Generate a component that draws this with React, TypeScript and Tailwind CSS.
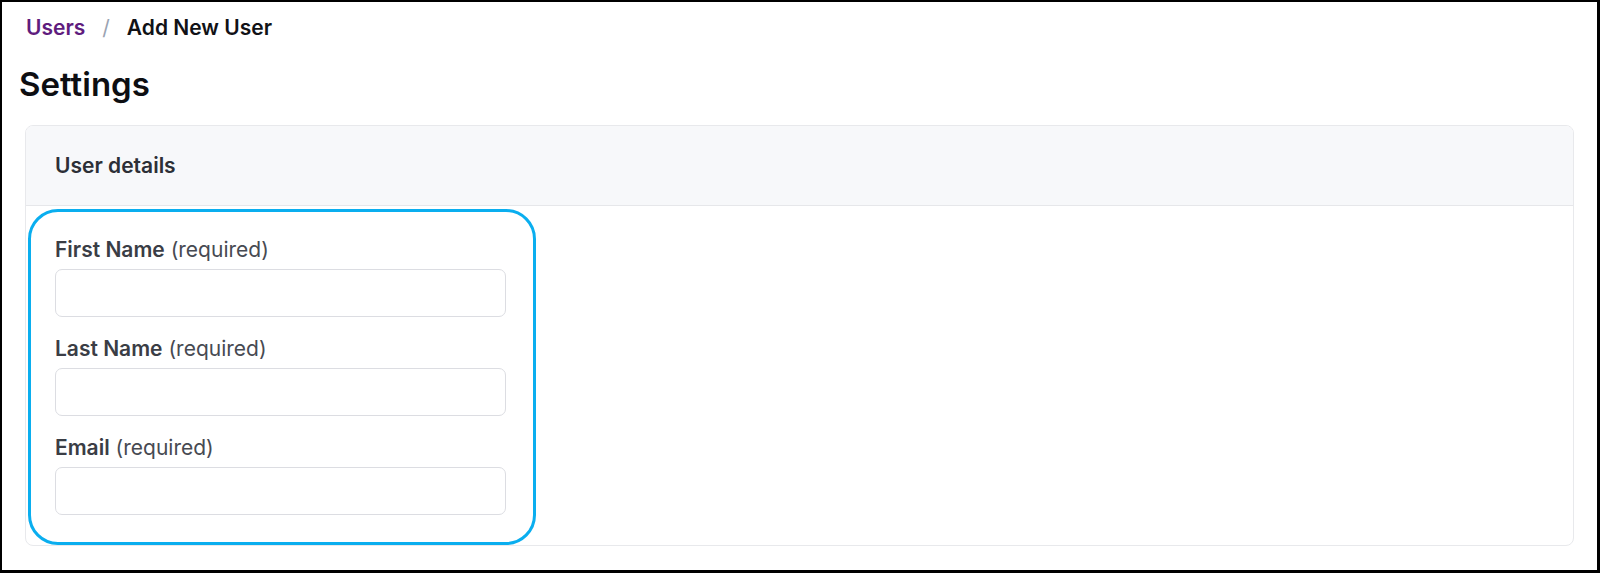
import React from "react"

const fields = ["First Name", "Last Name", "Email"]

export default function App() {
  return (
    <div
      className="h-[573px] w-full border-t-2 border-l-2 border-r-[3px] border-b-[3px] border-black bg-white text-[#1f2127]"
      style={{ fontFamily: "Inter, 'Open Sans', sans-serif" }}
    >
      {/* Breadcrumb */}
      <nav className="flex items-center pl-[24px] pt-[12px] text-[21px] font-semibold leading-[28px]">
        <span className="text-[#5f1c7e]">Users</span>
        <span className="mx-[17px] font-normal text-[#9aa3b2]">/</span>
        <span className="text-[#111216]">Add New User</span>
      </nav>

      <h1 className="pl-[17px] pt-[22px] text-[33px] font-semibold leading-[40px] text-[#0d0e12]">Settings</h1>

      {/* Card */}
      <div className="mx-[23px] mt-[21px] overflow-hidden rounded-lg border border-[#e8e9ec]">
        <div className="flex h-[80px] items-center border-b border-[#e6e7ea] bg-[#f7f8fa] px-[29px]">
          <h2 className="text-[21px] font-semibold text-[#2c2f36]">User details</h2>
        </div>
        <div className="px-[2px] pt-[3px]">
          <div className="flex w-[508px] flex-col gap-[19px] rounded-[30px] border-[3px] border-[#0aaeef] pb-[27px] pl-[24px] pr-[27px] pt-[25px]">
            {fields.map((f) => (
              <div key={f} className="flex flex-col gap-[6px]">
                <label className="text-[21px] leading-[26px] text-[#474a52]">
                  <span className="font-semibold text-[#3a3d45]">{f}</span> (required)
                </label>
                <input
                  type="text"
                  className="h-[48px] w-[451px] rounded-[7px] border border-[#dcdde2] bg-white px-3 outline-none"
                />
              </div>
            ))}
          </div>
        </div>
      </div>
    </div>
  )
}
